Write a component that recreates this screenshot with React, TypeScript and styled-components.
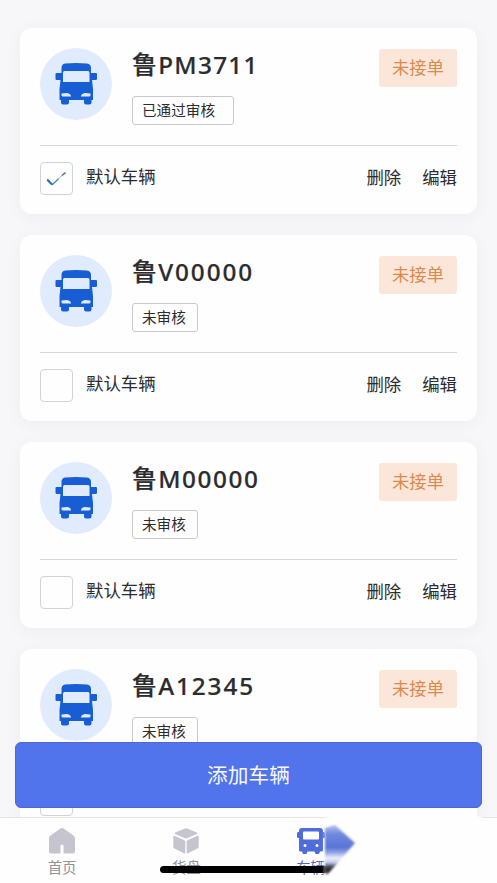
import React from 'react';
import styled, { createGlobalStyle } from 'styled-components';

const GlobalStyle = createGlobalStyle`
  * { box-sizing: border-box; }
  body {
    margin: 0;
    background: #f7f7f9;
    font-family: "Noto Sans CJK SC", sans-serif;
    color: #2c2c2e;
  }
  button { font: inherit; color: inherit; border: 0; background: none; padding: 0; }
`;

const Screen = styled.div`
  position: relative;
  width: 497px;
  height: 883px;
  overflow: hidden;
  background: #f7f7f9;
`;

const List = styled.main`
  display: flex;
  flex-direction: column;
  gap: 21px;
  padding: 28px 20px 0;
`;

const Card = styled.section`
  flex: none;
  height: 186px;
  padding: 20px 20px 0;
  border-radius: 12px;
  background: #fefefe;
  box-shadow: 0 3px 16px rgba(90, 90, 130, 0.06);
`;

const Summary = styled.div`
  display: flex;
  align-items: flex-start;
  height: 98px;
  border-bottom: 1px solid #d6d6d8;
`;

const Avatar = styled.div`
  width: 72px;
  height: 72px;
  border-radius: 50%;
  background: #e0ebfd;
  svg { display: block; }
`;

const Details = styled.div`
  flex: 1;
  margin-left: 20px;
  display: flex;
  flex-direction: column;
  align-items: flex-start;
`;

const Plate = styled.h2<{ $tracking: number }>`
  margin: 0;
  height: 36px;
  line-height: 31px;
  font-family: "Noto Sans", "Noto Sans CJK SC", sans-serif;
  font-size: 24.3px;
  font-weight: 500;
  letter-spacing: ${(p) => p.$tracking}px;
  -webkit-text-stroke: 0.2px currentColor;
  white-space: nowrap;
`;

const Region = styled.span`
  font-family: "Noto Sans CJK SC", sans-serif;
  font-size: 25px;
  letter-spacing: 1.2px;
`;

const Review = styled.div<{ $wide?: boolean }>`
  width: ${(p) => (p.$wide ? 102 : 66)}px;
  height: 29px;
  margin-top: 12px;
  padding-left: 9px;
  border: 1px solid #c9c9cb;
  border-radius: 3px;
  font-size: 14.6px;
  line-height: 26px;
  white-space: nowrap;
`;

const OrderTag = styled.div`
  width: 78px;
  height: 38px;
  margin-top: 1px;
  border-radius: 3px;
  background: #fce6d9;
  color: #db8a4e;
  font-size: 17.3px;
  line-height: 36px;
  text-align: center;
`;

const Footer = styled.div`
  display: flex;
  align-items: center;
  height: 64px;
  font-size: 17.4px;
  line-height: 26px;
`;

const Checkbox = styled.div`
  width: 33px;
  height: 33px;
  border: 1.5px solid #d3d3d6;
  border-radius: 4px;
  svg { display: block; }
`;

const DefaultLabel = styled.span`
  flex: 1;
  margin: -5px 0 0 13px;
`;

const Actions = styled.div`
  display: flex;
  gap: 21px;
  margin-top: -2px;
`;

const AddButton = styled.button`
  position: absolute;
  left: 15px;
  top: 742px;
  width: 467px;
  height: 66px;
  border: 1px solid #4d68cf;
  border-radius: 6px;
  background: #5173eb;
  color: #f7f9ff;
  font-size: 20.7px;
  line-height: 62px;
  padding-bottom: 2px;
  text-align: center;
`;

const TabBar = styled.nav`
  position: absolute;
  left: 0;
  right: 0;
  bottom: 0;
  height: 66px;
  display: grid;
  grid-template-columns: repeat(4, 1fr);
  border-top: 1px solid #e3e3e7;
  background: #fefefe;
`;

const Tab = styled.div<{ $active?: boolean }>`
  display: flex;
  flex-direction: column;
  align-items: center;
  padding-top: 9px;
  color: ${(p) => (p.$active ? '#4d67c4' : '#929297')};
  font-size: 14.5px;
  line-height: 22px;
  svg { display: block; margin-bottom: 1px; }
`;

const HomeIndicator = styled.div`
  position: absolute;
  left: 160px;
  top: 866px;
  width: 172px;
  height: 7px;
  border-radius: 4px;
  background: #000;
`;

const Fade = styled.svg`
  position: absolute;
  left: 310px;
  top: 808px;
`;

const BusIcon = () => (
  <svg width="72" height="72" viewBox="0 0 72 72">
    <path
      fill="#175ed5"
      fillRule="evenodd"
      d="M25 15.500Q36 14.300 47 15.500Q51 16 51 20V25H56Q57 25 57 26V31Q57 32 55.500 32H52L53 41V52H51.500V54.500Q51.500 56.500 49.500 56.500H46Q44 56.500 44 54.500V52H29V54.500Q29 56.500 27 56.500H23Q21 56.500 21 54.500V52H19.500V41L20.500 32H17Q15.500 32 15.500 31V26Q15.500 25 16.500 25H21.500V20Q21.500 16 25 15.500ZM24.500 23Q23 23 23 24.500V34H49.500V24.500Q49.500 23 48 23ZM21.500 45.500V47Q21.500 48.500 23 48.500H31Q31 45.500 27 45ZM41 48.500H49Q50.500 48.500 50.500 47V45.500L45 45Q41 45.500 41 48.500Z"
    />
  </svg>
);

const CheckIcon = () => (
  <svg width="30" height="30" viewBox="0 0 30 30" fill="none">
    <path d="M6.200 16.500L11 21.500" stroke="#286fae" strokeWidth="2" />
    <path d="M11 22L17.500 15.800" stroke="#3985b8" strokeWidth="1.200" />
    <path d="M17.500 15.800L21 12.500" stroke="#77a7c8" strokeWidth="0.900" />
    <path d="M21 12.500L24.500 9.700" stroke="#52718c" strokeWidth="1.500" />
  </svg>
);

const HomeIcon = () => (
  <svg width="26" height="28" viewBox="0 0 26 28">
    <path
      fill="#c6c5cf"
      d="M11.500 1.500Q13 .7 14.500 1.500L24.500 8.500Q26 9.500 26 11V24.500Q26 26.500 24 26.500H14.500V19Q14.500 17.500 13 17.500Q11.500 17.500 11.500 19V26.500H2Q0 26.500 0 24.500V11Q0 9.500 1.500 8.500Z"
    />
  </svg>
);

const BoxIcon = () => (
  <svg width="26" height="28" viewBox="0 0 26 28" fill="#c6c5cf">
    <path d="M11.800 1.400Q13 1 14.200 1.400L23.800 5.500Q25 6.300 23.800 7L14 11.300Q13 11.600 12 11.300L2.200 7Q1 6.300 2.200 5.500Z" />
    <path d="M1.400 8.800L11 13Q12.300 13.500 12.300 14.500V25.500Q12.300 26.800 10.800 26.300L1.500 21.500Q.3 20.900 .3 19.700V9.500Q.3 8.400 1.400 8.800Z" />
    <path d="M24.600 8.800L15 13Q13.700 13.500 13.700 14.500V25.500Q13.700 26.800 15.200 26.300L24.500 21.500Q25.700 20.900 25.700 19.700V9.500Q25.700 8.400 24.600 8.800Z" />
  </svg>
);

const TabBusIcon = () => (
  <svg width="28" height="28" viewBox="0 0 28 28">
    <path
      fill="#506cd8"
      fillRule="evenodd"
      d="M5 1H23Q26 1 26 4V5H27Q28 5 28 6.500V10Q28 11 27 11H26V23Q26 24.500 24.500 24.500H23L22 27H18.500L17.500 24.500H10.500L9.500 27H6L5 24.500H3.500Q2 24.500 2 23V11H1Q0 11 0 10V6.500Q0 5 1 5H2V4Q2 1 5 1ZM7 4.500Q6 4.500 6 5.500V11.500Q6 12.500 7 12.500H21Q22 12.500 22 11.500V5.500Q22 4.500 21 4.500ZM8 17A1.500 1.500 0 1 0 8 20A1.500 1.500 0 1 0 8 17ZM20 17A1.500 1.500 0 1 0 20 20A1.500 1.500 0 1 0 20 17Z"
    />
  </svg>
);

const FadeOverlay = () => (
  <Fade width="187" height="75" viewBox="0 0 187 75">
    <defs>
      <linearGradient id="streak" x1="0" y1="17" x2="0" y2="67" gradientUnits="userSpaceOnUse">
        <stop offset="0" stopColor="#b6c3f3" />
        <stop offset="0.180" stopColor="#7189dd" />
        <stop offset="0.450" stopColor="#5875d6" />
        <stop offset="0.550" stopColor="#92a3e4" />
        <stop offset="0.660" stopColor="#eef0fb" />
        <stop offset="0.750" stopColor="#c6cceb" />
        <stop offset="0.820" stopColor="#4b5066" />
        <stop offset="0.920" stopColor="#17181d" />
        <stop offset="1" stopColor="#a5a5ac" />
      </linearGradient>
      <linearGradient id="edge" x1="12" y1="0" x2="20" y2="0" gradientUnits="userSpaceOnUse">
        <stop offset="0" stopColor="#fefefe" stopOpacity="0" />
        <stop offset="1" stopColor="#fefefe" />
      </linearGradient>
      <filter id="soft" x="-20%" y="-20%" width="140%" height="140%">
        <feGaussianBlur stdDeviation="0.800" />
      </filter>
    </defs>
    <path fill="url(#edge)" d="M12 8H166L178 11L168 17V75H12Z" />
    <path fill="url(#streak)" filter="url(#soft)" d="M15 20L25 17L45 35Q32 50 17 67L15 65Z" />
  </Fade>
);

const vehicles = [
  { number: 'PM3711', approved: true, tracking: 1.3 },
  { number: 'V00000', approved: false, tracking: 1.9 },
  { number: 'M00000', approved: false, tracking: 1.6 },
  { number: 'A12345', approved: false, tracking: 1.9 },
];

export default function App() {
  return (
    <>
      <GlobalStyle />
      <Screen>
        <List>
          {vehicles.map((v) => (
            <Card key={v.number}>
              <Summary>
                <Avatar><BusIcon /></Avatar>
                <Details>
                  <Plate $tracking={v.tracking}><Region>鲁</Region>{v.number}</Plate>
                  <Review $wide={v.approved}>{v.approved ? '已通过审核' : '未审核'}</Review>
                </Details>
                <OrderTag>未接单</OrderTag>
              </Summary>
              <Footer>
                <Checkbox>{v.approved && <CheckIcon />}</Checkbox>
                <DefaultLabel>默认车辆</DefaultLabel>
                <Actions>
                  <button>删除</button>
                  <button>编辑</button>
                </Actions>
              </Footer>
            </Card>
          ))}
        </List>
        <AddButton>添加车辆</AddButton>
        <TabBar>
          <Tab><HomeIcon />首页</Tab>
          <Tab><BoxIcon />货盘</Tab>
          <Tab $active><TabBusIcon />车辆</Tab>
        </TabBar>
        <HomeIndicator />
        <FadeOverlay />
      </Screen>
    </>
  );
}
